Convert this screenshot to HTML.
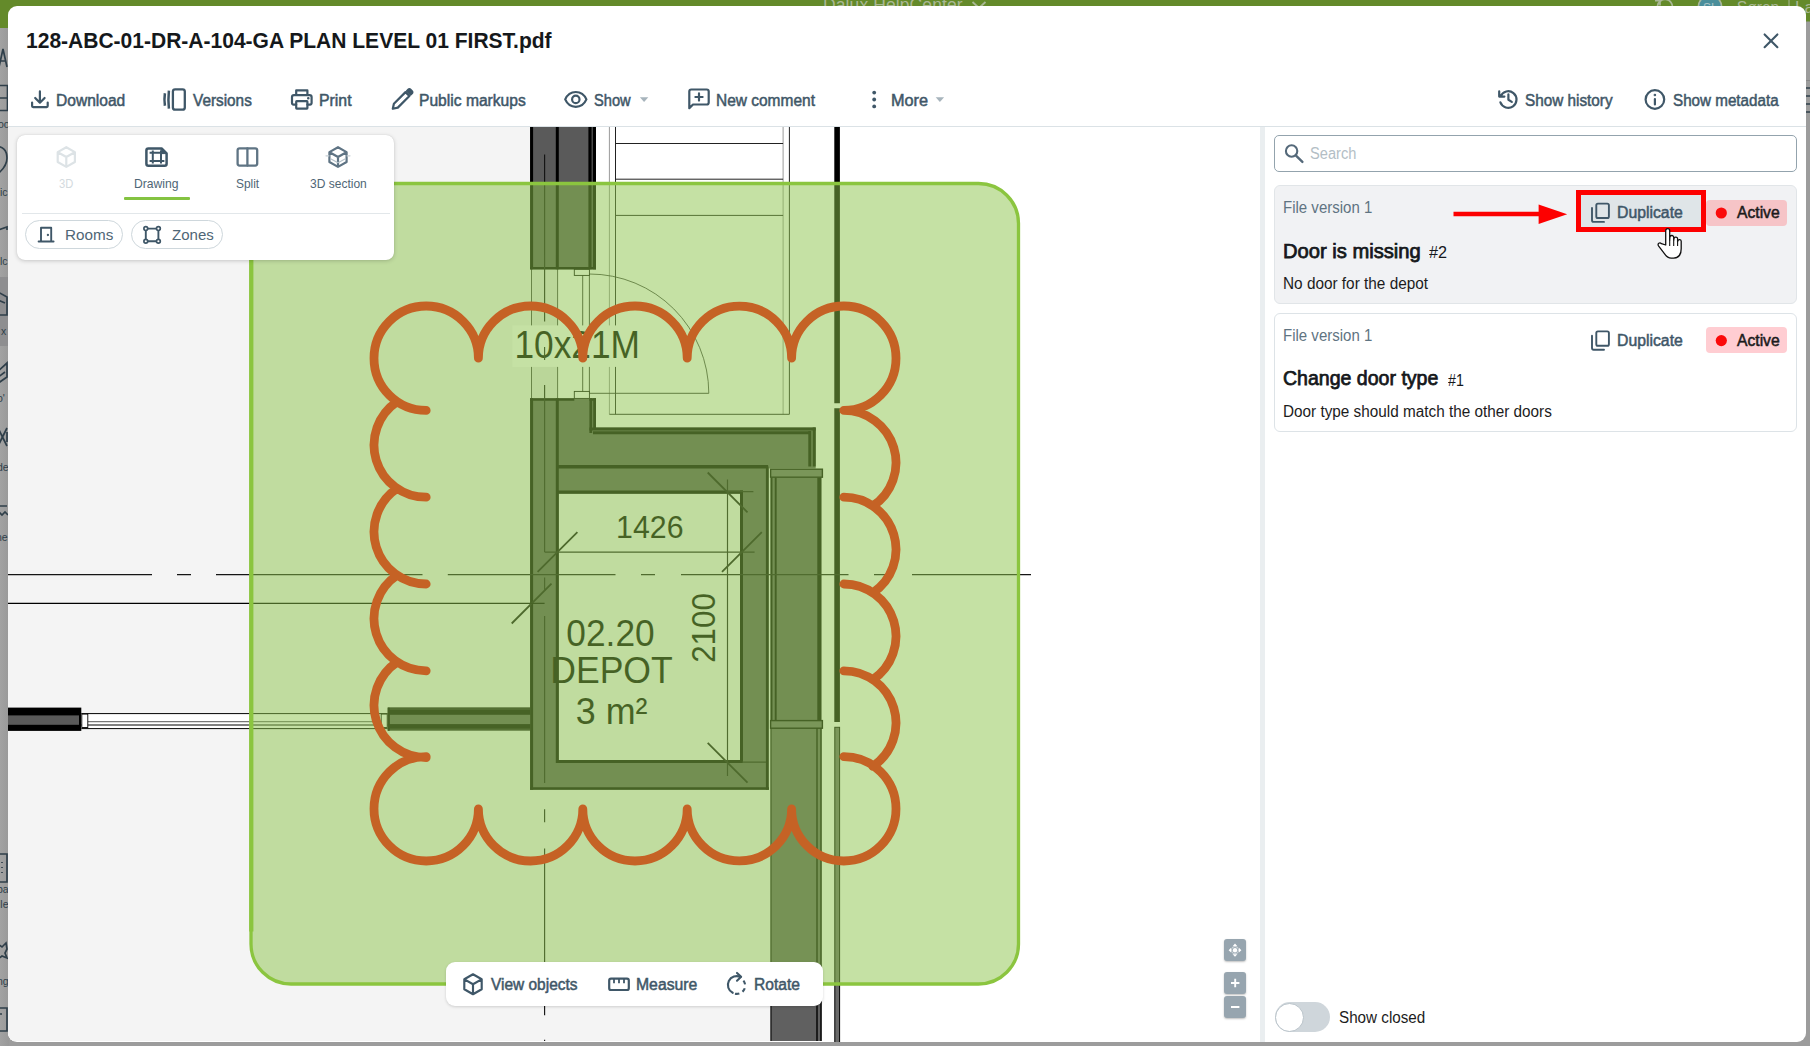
<!DOCTYPE html>
<html><head><meta charset="utf-8">
<style>
*{box-sizing:border-box}
html,body{margin:0;padding:0}
body{width:1810px;height:1046px;overflow:hidden;background:#9c9c9c;position:relative;font-family:"Liberation Sans",sans-serif;color:#3f5768}
.abs{position:absolute}
#modal{position:absolute;left:8px;top:5.7px;width:1798px;height:1036px;background:#fff;border-radius:9px;overflow:hidden}
#pg{position:absolute;left:-8px;top:-5.7px;width:1810px;height:1046px}
.t{position:absolute;white-space:nowrap;line-height:20px;font-size:15px;color:#3f5768;-webkit-text-stroke:0.35px #3f5768;transform-origin:0 50%}
.ic{position:absolute;overflow:visible}
.ic *{fill:none;stroke:#3f5768;stroke-width:2.2;stroke-linecap:round;stroke-linejoin:round}
</style></head><body>
<!-- background app (dimmed) -->
<div class="abs" style="left:0;top:0;width:1810px;height:28px;background:#648a2a"></div>
<div class="abs" style="left:0;top:28px;width:9px;height:1018px;background:linear-gradient(90deg,#a2a2a2,#999)"></div>
<div class="abs" style="left:0;top:277px;width:9px;height:69px;background:#8e8e90"></div>
<div class="abs" style="left:823px;top:-4.6px;font-size:17.5px;line-height:20px;color:#a9b795;white-space:nowrap;letter-spacing:.1px">Dalux HelpCenter</div>
<svg class="abs" style="left:0;top:0" width="1810" height="1046" viewBox="0 0 1810 1046">
<path d="M972.5 2l6.5 6 6.5-6" fill="none" stroke="#a9b795" stroke-width="1.8"/>
<circle cx="1710" cy="7.2" r="11.8" fill="#4a8e9b" stroke="#aab69a" stroke-width="1.6"/>
<text x="1703" y="11.5" font-family="Liberation Sans, sans-serif" font-size="12" fill="#a9c3c6">SL</text>
<text x="1736.8" y="13.4" font-family="Liberation Sans, sans-serif" font-size="17" fill="#a9b795" textLength="42.5" lengthAdjust="spacingAndGlyphs">Søren</text>
<text x="1795" y="13.4" font-family="Liberation Sans, sans-serif" font-size="17" fill="#a9b795">Lar</text>
<path d="M1789 0v7" stroke="#a9b795" stroke-width="1"/>
<path d="M1657.5 6a7.5 7.5 0 0 1 15 2M1655 0.6h5v5" fill="none" stroke="#a9b795" stroke-width="1.7"/>
<!-- left strip fragments -->
<g fill="none" stroke="#2f3f4a" stroke-width="1.7">
<path d="M-1 67l4-18 4 18M0 61h6"/>
<path d="M-2 85.5h9.5v25H-2M-2 98h9.5"/>
<path d="M-6 147c9-2 13 4 13 11s-5 13-12 18"/>
<path d="M-2 230l9-3v3"/>
<path d="M-2 292l9 5v18h-9M-2 300l7 3"/>
<path d="M-3 372l10-9v14l-10 7M-3 378l8-6"/>
<path d="M-2 428l9 18M7 428l-9 18M7 432v10"/>
<path d="M-2 506h9M-1 512l3 3 3-3 3 3"/>
<path d="M-2 854h9v28H-2M2 862v1M2 867v1M2 872v1" />
<path d="M-2 944l4 3 4-4 1 6-2 4 2 5-5-2-4 3"/>
<path d="M-2 1008h9v23H-2M0 1014h2"/>
</g>
<g font-family="Liberation Sans, sans-serif" font-size="10.5" fill="#2f3f4a">
<text x="-2" y="128">oo</text><text x="0" y="196">ic</text><text x="0" y="265">lc</text><text x="1" y="334.5">x</text><text x="-3" y="402">o'</text><text x="-3" y="471">de</text><text x="-4" y="541">ne</text><text x="-3" y="893">pa</text><text x="-2" y="908">ile</text><text x="-3" y="985">ng</text>
</g>
<!-- right strip fragments -->
<rect x="1806" y="21.5" width="4" height="7" fill="#9c9c9c"/>
<path d="M1806 88h4M1806 96h4M1806 104h4M1806 112h4" stroke="#2f3f4a" stroke-width="1.6"/>
<path d="M1806 80.5h4" stroke="#888" stroke-width="1"/>
</svg>

<div id="modal"><div id="pg">
<div class="abs" style="left:8px;top:126px;width:1798px;height:1px;background:#dbe2e6"></div>
<svg class="ic" style="left:0;top:0" width="1810" height="130" viewBox="0 0 1810 130">
<!-- close -->
<path d="M1764.6 34.4l12.8 12.8M1777.4 34.4l-12.8 12.8" style="stroke-width:2.1"/>
<!-- download -->
<path d="M39.9 91.4v11M35.2 98l4.7 4.7 4.7-4.7M32.1 102.6v3.5a1 1 0 0 0 1 1h13.6a1 1 0 0 0 1-1v-3.5"/>
<!-- versions -->
<rect x="172.9" y="89.3" width="11.9" height="20.4" rx="2.2" style="stroke-width:2.3"/>
<path d="M168.9 90.6q-0.9 9 0 18M164.9 93.3q-0.9 6.2 0 12.4" style="stroke-width:2.5;stroke-linecap:butt"/>
<!-- print -->
<path d="M296.2 95v-4.6h11.2v4.6M296.2 104.6h-2.7a1.5 1.5 0 0 1-1.5-1.5v-6a2 2 0 0 1 2-2h15.6a2 2 0 0 1 2 2v6a1.5 1.5 0 0 1-1.5 1.5h-2.7"/>
<rect x="296.2" y="101.2" width="11.2" height="7.4" rx="0.5"/>
<circle cx="308.3" cy="98.3" r="0.6" style="stroke-width:1.4"/>
<!-- pencil -->
<path d="M392.8 108.7l1.1-5 11.6-11.6 3.9 3.9-11.6 11.6z"/><path d="M406.6 91l1.6-1.6a1.6 1.6 0 0 1 2.3 0l1.7 1.7a1.6 1.6 0 0 1 0 2.3l-1.6 1.6z" style="fill:#3f5768;stroke-width:1.6"/>
<!-- eye -->
<path d="M565.2 99.4c2-4.6 5.9-7.4 10.6-7.4s8.6 2.8 10.6 7.4c-2 4.6-5.9 7.4-10.6 7.4s-8.6-2.8-10.6-7.4z"/>
<circle cx="575.8" cy="99.4" r="3.7"/>
<!-- new comment -->
<path d="M689.3 108.2v-16.7a2 2 0 0 1 2-2h15.4a2 2 0 0 1 2 2v11a2 2 0 0 1-2 2h-13.7zM699 93.4v7.2M695.4 97h7.2"/>
<!-- more dots -->
<g style="fill:#3f5768;stroke:none"><circle cx="874.2" cy="92.6" r="1.9" style="fill:#3f5768;stroke:none"/><circle cx="874.2" cy="99.5" r="1.9" style="fill:#3f5768;stroke:none"/><circle cx="874.2" cy="106.4" r="1.9" style="fill:#3f5768;stroke:none"/></g>
<!-- carets -->
<path d="M639.9 97.3h8.4l-4.2 4.6z" style="fill:#a7b4bc;stroke:none"/>
<path d="M935.7 97.3h8.4l-4.2 4.6z" style="fill:#a7b4bc;stroke:none"/>
<!-- history -->
<path d="M1500.6 96.2a8.3 8.3 0 1 1-0.2 6.2M1499.2 91.4v5.2h5.2M1508.4 94.4v5.4l3.4 2.1"/>
<!-- info -->
<circle cx="1654.9" cy="99.5" r="9.3"/>
<path d="M1654.9 99v5.4"/><circle cx="1654.9" cy="95" r="0.5" style="stroke-width:1.6"/>
</svg>

<svg class="abs" style="left:8px;top:127px" width="1252" height="915" viewBox="8 127 1252 915" shape-rendering="auto">
<rect x="8" y="127" width="1252" height="914" fill="#fff"/>
<!-- room fill (light grey) -->
<path d="M8 127H531V432H770V1041H8z" fill="#f4f4f4"/>
<rect x="531.5" y="269" width="26.1" height="130" fill="#e9e9e9"/>
<g id="drw" fill="none" stroke="#000">
<!-- shaft thin lines -->
<g stroke-width="1">
<path d="M609.4 127V414.3M783.1 127V414.3" stroke="#9a9a9a"/>
<path d="M615.5 127V414.3M789.4 127V414.3M609.4 414.3H789.4M615.5 143.5H783.1M615.5 179.2H783.1M615.5 215.4H783.1" stroke="#222"/>
<!-- door opening thin lines -->
<path d="M531.5 269V398M557.6 269V398" stroke="#333" stroke-width="0.9"/>
<!-- door leaf -->
<path d="M582.7 275V393.3M589.4 274V393.3M589.4 393.3H708.8" stroke="#222" stroke-width="0.9"/>
<path d="M589.4 274A119.4 119.4 0 0 1 708.8 393.3" stroke="#222" stroke-width="0.8"/>
</g>
<!-- upper-left wall -->
<rect x="530.1" y="127" width="65.9" height="142.2" fill="#5a5a5a" stroke="none"/>
<path d="M531.6 127V269.2M557.3 127V269.2" stroke-width="3"/>
<path d="M590 127V269.2M594.4 127V269.2" stroke-width="3.2"/>
<path d="M530.1 268.3H596" stroke-width="2.4"/>
<rect x="574.3" y="269.4" width="15.1" height="6" fill="#fff" stroke-width="0.9"/>
<!-- lower wall system fill -->
<path d="M530.1 398.3H596V427.4H815.7V468.5H769V789.8H530.1z" fill="#5a5a5a" stroke="none"/>
<rect x="558.8" y="493.7" width="181.2" height="266.5" fill="#f4f4f4" stroke="none"/>
<!-- wall lines -->
<path d="M531.6 398.3V789.8" stroke-width="3"/>
<path d="M557.3 398.3V763" stroke-width="3"/>
<path d="M530.1 399.5H574.3M589.4 399.5H596" stroke-width="2.4"/>
<path d="M590.8 398.3V433M594.6 398.3V429" stroke-width="2.8"/>
<path d="M589.4 429H815.7M593 432.8H810" stroke-width="3"/>
<path d="M809.8 431V466.5M814.2 427.4V466.5" stroke-width="3"/>
<path d="M557.2 466.8H768.1" stroke-width="3.4"/>
<path d="M557.2 492.2H743" stroke-width="3.2"/>
<path d="M741.5 490.6V763" stroke-width="3"/>
<path d="M767.2 466.5V789.8" stroke-width="2.6"/>
<path d="M557.2 761.5H743" stroke-width="3"/>
<path d="M530.1 788.5H769" stroke-width="2.6"/>
<rect x="574.3" y="391.4" width="15.1" height="7" fill="#fff" stroke-width="0.9"/>
<!-- column -->
<rect x="770.5" y="477.6" width="51" height="243" fill="#5a5a5a" stroke="none"/>
<rect x="770.5" y="728" width="51" height="313" fill="#606060" stroke="none"/>
<path d="M771.5 477.6V720M775.7 477.6V720" stroke-width="1.9"/>
<path d="M819.3 477.6V720" stroke-width="4"/>
<rect x="770.6" y="469.2" width="51.8" height="8" fill="#686868" stroke-width="1.4"/>
<rect x="770.6" y="720.6" width="51.8" height="7.6" fill="#686868" stroke-width="1.4"/>
<path d="M771 728V1041" stroke-width="1"/>
<path d="M817 728V1041M821 728V1041" stroke-width="1.4"/>
<!-- thick line right -->
<path d="M837.1 127V403.3M837.1 408.3V722" stroke-width="5.6"/>
<rect x="834.8" y="727.3" width="4.8" height="320" fill="#6a6a6a" stroke-width="1"/>
<!-- left wall + window -->
<rect x="8" y="707.6" width="73.3" height="23.3" fill="#000" stroke="none"/>
<rect x="8" y="715.4" width="71" height="9.4" fill="#5a5a5a" stroke="none"/>
<rect x="81.3" y="713.6" width="306.4" height="15" fill="#fff" stroke="none"/>
<path d="M81.3 713.6H387.7M81.3 725H387.7M81.3 728.6H387.7" stroke-width="1"/>
<path d="M87.8 721.6H381" stroke="#777" stroke-width="1.2"/>
<rect x="81.8" y="714.1" width="6" height="13.4" fill="#fff" stroke-width="0.9"/>
<rect x="381.2" y="714.1" width="6" height="13.4" fill="#fff" stroke-width="0.9"/>
<rect x="387.7" y="707.4" width="142.4" height="23.2" fill="#000" stroke="none"/>
<rect x="389.6" y="714.8" width="140.5" height="9.3" fill="#5a5a5a" stroke="none"/>
<path d="M389.6 709H530.1M389.6 729.2H530.1" stroke="#4a4a4a" stroke-width="0.7"/>
<path d="M388.7 707.7V730.8" stroke-width="2"/>
<g stroke-width="1.8" stroke="#111">
<path d="M537.6 571.9L577.4 532.1M722 571.9L761.8 532.1M511.7 623.5L551.5 583.7M707.7 472.5L747.5 512.3M707.7 742.9L747.5 782.7"/>
</g>
</g>
<!-- label box + texts -->
<rect x="512.4" y="325.4" width="129" height="41.5" fill="#fff"/>
<g font-family="Liberation Sans, sans-serif" fill="#000" text-anchor="middle">
<text x="577.2" y="358.4" font-size="38.4" textLength="125.6" lengthAdjust="spacingAndGlyphs">10x21M</text>
<text x="649.8" y="537.8" font-size="31.2" textLength="67.4" lengthAdjust="spacingAndGlyphs">1426</text>
<text x="610.5" y="646" font-size="37.4" textLength="88.3" lengthAdjust="spacingAndGlyphs">02.20</text>
<text x="611.5" y="682.6" font-size="37.4" textLength="122.5" lengthAdjust="spacingAndGlyphs">DEPOT</text>
<text x="611.7" y="724.4" font-size="37.4" textLength="71.7" lengthAdjust="spacingAndGlyphs">3 m²</text>
<text transform="translate(714.5 628) rotate(-90)" x="0" y="0" font-size="33.6" textLength="69.6" lengthAdjust="spacingAndGlyphs">2100</text>
</g>
<g fill="none"><g stroke-width="1.15" stroke="#151515">
<path d="M544.6 154.6V321.6M544.6 347V360M544.6 385V552M544.6 577.4V590.4M544.6 616V783M544.6 809.3V822.3M544.6 848.4V1015.3M544.6 1039.7V1041"/>
<path d="M8 574.6H152M177 574.6H191M216 574.6H422.5M447.8 574.6H615.5M641 574.6H655M681 574.6H848.5M874 574.6H888.6M912 574.6H1031"/>
<path d="M8 603.3H544.6" stroke="#000" stroke-width="1.3"/>
<path d="M544.6 552.1H754.6M727.5 479.6V776.1M727.5 491.6H753.4M742 762.1H766"/>
</g>
</g>
<!-- cloud -->
<path d="M478.4 358.2A52.2 52.2 0 0 1 582.8 358.2M582.8 358.2A52.2 52.2 0 0 1 687.2 358.2M687.2 358.2A52.2 52.2 0 0 1 791.6 358.2M582.8 808.8A52.2 52.2 0 0 1 478.4 808.8M687.2 808.8A52.2 52.2 0 0 1 582.8 808.8M791.6 808.8A52.2 52.2 0 0 1 687.2 808.8M478.4 358.2A52.2 52.2 0 1 0 426.2 410.4M791.6 358.2A52.2 52.2 0 1 1 843.8 410.4M397.2 401.6A52.2 52.2 0 0 0 426.2 497.2M397.2 488.4A52.2 52.2 0 0 0 426.2 584.0M397.2 575.2A52.2 52.2 0 0 0 426.2 670.8M397.2 662.0A52.2 52.2 0 0 0 426.2 757.6M843.8 410.4A52.2 52.2 0 0 1 872.8 506.0M843.8 497.2A52.2 52.2 0 0 1 872.8 592.8M843.8 584.0A52.2 52.2 0 0 1 872.8 679.6M843.8 670.8A52.2 52.2 0 0 1 872.8 766.4M426.2 756.6A52.2 52.2 0 1 0 478.4 808.8M843.8 756.6A52.2 52.2 0 1 1 791.6 808.8" fill="none" stroke="#ff0000" stroke-width="8.8" stroke-linecap="round"/>
<!-- overlay -->
<rect x="251" y="183.5" width="767.5" height="800.5" rx="40" fill="#8bc34a" fill-opacity="0.5" stroke="#8bc53f" stroke-width="3.3"/>
<path d="M251.3 224V931.5" stroke="#8bc53f" stroke-width="4.2" fill="none"/>
</svg>

<!-- view panel -->
<div class="abs" style="left:17px;top:135px;width:377px;height:125px;background:#fff;border-radius:8px;box-shadow:0 1px 4px rgba(0,0,0,.18),0 0 1px rgba(0,0,0,.15)"></div>
<div class="abs" style="left:124.2px;top:196.8px;width:65.8px;height:3px;background:#84c341;border-radius:1px"></div>
<div class="abs" style="left:21.5px;top:213px;width:368.5px;height:1px;background:#e2e7ea"></div>
<div class="abs" style="left:25px;top:220.2px;width:97.8px;height:29.3px;border:1px solid #ced7dc;border-radius:15px"></div>
<div class="abs" style="left:131.2px;top:220.2px;width:91.7px;height:29.3px;border:1px solid #ced7dc;border-radius:15px"></div>
<svg class="ic" style="left:0;top:130px" width="400" height="130" viewBox="0 130 400 130">
<!-- 3D cube disabled -->
<g style="stroke:#dde3e6"><path d="M66.3 147.2l8.6 4.9v9.9l-8.6 4.9-8.6-4.9v-9.9zM57.9 152.2l8.4 4.8 8.4-4.8M66.3 157v9.7" style="stroke:#dde3e6"/></g>
<!-- drawing -->
<path d="M148.4 148.4h13.2l5 5v10.3a2 2 0 0 1-2 2h-16.2a2 2 0 0 1-2-2v-13.3a2 2 0 0 1 2-2z" style="stroke-width:2.5"/>
<path d="M161.4 148.6l5 5h-5z" style="fill:#3f5768;stroke-width:1"/>
<path d="M149.6 152.8h14.8M149.6 161h14.8M152.8 150.4v13.2M161 150.4v13.2" style="stroke-width:2;stroke-linecap:butt"/>
<!-- split -->
<rect x="237.6" y="148.3" width="19.6" height="17.3" rx="2" style="stroke:#5f7484;stroke-width:2.3"/><path d="M247.4 148.3v17.3" style="stroke:#5f7484;stroke-width:2.3"/>
<!-- 3D section -->
<path d="M338 147.2l8.6 4.9v9.9l-8.6 4.9-8.6-4.9v-9.9zM329.6 152.2l8.4 4.8 8.4-4.8M338 157v9.7" style="stroke:#5f7484;stroke-width:2.2"/>
<path d="M326 155.8h3M347 155.8h3" style="stroke:#c5ced4;stroke-width:1.2"/>
<path d="M331 159l7 3.8 7-3.8" style="stroke:#b4c0c8;stroke-width:1.2"/>
<!-- rooms door icon -->
<path d="M38.6 241.5h15M41 241.5v-13.8h10.2v13.8" style="stroke-width:1.9"/><circle cx="47.9" cy="235" r="0.5" style="stroke-width:1.3"/>
<!-- zones icon -->
<rect x="145.8" y="228.6" width="12.6" height="12.6" style="stroke-width:1.9"/>
<g><circle cx="145.8" cy="228.6" r="1.9" style="fill:#fff;stroke-width:1.7"/><circle cx="158.4" cy="228.6" r="1.9" style="fill:#fff;stroke-width:1.7"/><circle cx="145.8" cy="241.2" r="1.9" style="fill:#fff;stroke-width:1.7"/><circle cx="158.4" cy="241.2" r="1.9" style="fill:#fff;stroke-width:1.7"/></g>
</svg>
<!-- bottom toolbar -->
<div class="abs" style="left:446px;top:962px;width:377px;height:44px;background:#fff;border-radius:9px;box-shadow:0 1px 3px rgba(0,0,0,.16)"></div>
<svg class="ic" style="left:440px;top:960px" width="400" height="50" viewBox="440 960 400 50">
<path d="M473 974.3l8.7 5v9.9l-8.7 5-8.7-5v-9.9zM464.5 979.4l8.5 4.9 8.5-4.9M473 984.3v9.8" style="stroke-width:2.15"/>
<rect x="609.2" y="978.6" width="19.6" height="11.4" rx="1.8"/><path d="M614 979v4.2M619 979v4.2M624 979v4.2" style="stroke-width:1.8;stroke-linecap:butt"/>
<path d="M737 972.9l4.1 3.9-4.1 3.9" style="stroke-width:2.1"/><path d="M740.6 977.1a8.3 8.3 0 0 0-7.9 15.7" style="stroke-width:2.1"/><path d="M732.7 992.8a8.3 8.3 0 0 0 10.6-12.4" style="stroke-width:2.1;stroke-dasharray:4.2 3.6;stroke-dashoffset:-2.5;stroke-linecap:butt"/>
</svg>
<!-- zoom buttons -->
<div class="abs" style="left:1224px;top:939px;width:22px;height:22px;background:#97a5af;border-radius:3px;box-shadow:0 1px 2px rgba(0,0,0,.25)"></div>
<div class="abs" style="left:1224px;top:972px;width:22px;height:22px;background:#97a5af;border-radius:3px;box-shadow:0 1px 2px rgba(0,0,0,.25)"></div>
<div class="abs" style="left:1224px;top:996px;width:22px;height:22px;background:#97a5af;border-radius:3px;box-shadow:0 1px 2px rgba(0,0,0,.25)"></div>
<svg class="abs" style="left:1220px;top:935px" width="30" height="90" viewBox="1220 935 30 90">
<circle cx="1235" cy="950.2" r="2.2" fill="#fff"/><circle cx="1235" cy="950.2" r="3.6" fill="none" stroke="#fff" stroke-opacity=".55" stroke-width="1"/>
<path d="M1235 943.6l2.4 2.6h-4.8zM1235 956.8l2.4-2.6h-4.8zM1228.6 950.2l2.5-2.4v4.8zM1241.4 950.2l-2.5-2.4v4.8z" fill="#fff"/>
<path d="M1231 983h8.4M1235.2 978.8v8.4M1231 1007h8.4" stroke="#fff" stroke-width="1.9" fill="none"/>
</svg>
<!-- divider -->
<div class="abs" style="left:1260px;top:127px;width:5px;height:916px;background:#eaeef0"></div>
<!-- right panel -->
<div class="abs" style="left:1274px;top:135px;width:523px;height:36.5px;border:1px solid #93a3ad;border-radius:5px;background:#fff"></div>
<svg class="ic" style="left:1280px;top:140px" width="30" height="30" viewBox="1280 140 30 30"><circle cx="1291.6" cy="151" r="5.7" style="stroke:#55697a;stroke-width:2.1"/><path d="M1296 155.6l6.4 6.3" style="stroke:#55697a;stroke-width:2.4"/></svg>
<div class="abs" style="left:1274px;top:185px;width:523px;height:118.5px;border:1px solid #e1e5e8;border-radius:6px;background:#f1f2f4"></div>
<div class="abs" style="left:1274px;top:313px;width:523px;height:118.5px;border:1px solid #dde3e7;border-radius:6px;background:#fff"></div>
<!-- duplicate hover + red box -->
<div class="abs" style="left:1576px;top:190px;width:130px;height:41.5px;border:5px solid #fd0000;background:#dfe5e8"></div>
<div class="abs" style="left:1705.5px;top:199.8px;width:81.5px;height:26px;background:#f6c4c7;border-radius:4px"></div>
<div class="abs" style="left:1705.5px;top:327.3px;width:81.5px;height:26px;background:#ffcdd2;border-radius:4px"></div>
<svg class="abs" style="left:1440px;top:185px" width="360" height="180" viewBox="1440 185 360 180">
<circle cx="1721.3" cy="213" r="5.6" fill="#fb0a0a"/><circle cx="1721.3" cy="340.6" r="5.6" fill="#fb0a0a"/>
<path d="M1453.5 214H1541" stroke="#fd0000" stroke-width="4.6" fill="none"/><path d="M1538.6 204.5L1567.2 214.2 1538.6 224z" fill="#fd0000"/>
<g fill="none" stroke="#3f5768" stroke-width="1.9" stroke-linejoin="round" stroke-linecap="round">
<rect x="1596.3" y="203.6" width="12.6" height="14.4" rx="1.6"/><path d="M1592 208v12.3a1.6 1.6 0 0 0 1.6 1.6h10.4"/>
<rect x="1596.3" y="331.4" width="12.6" height="14.4" rx="1.6"/><path d="M1592 335.8v12.3a1.6 1.6 0 0 0 1.6 1.6h10.4"/>
</g>
<!-- hand cursor -->
<g transform="translate(1656.5 227.5)">
<path d="M9.2 17.5V3.2a2 2 0 0 1 4 0v9.2l0.2-2.6a1.9 1.9 0 0 1 3.8 0.2v2.8l0.3-1.6a1.8 1.8 0 0 1 3.6 0.4v2.6l0.3-1a1.7 1.7 0 0 1 3.3 0.6v7.4c0 5.5-2.6 9.4-7.6 9.4h-2.4c-3 0-4.6-1.4-6.2-3.8L2 18.4c-1.3-2.2 1.2-3.9 2.9-2.2z" fill="#fff" stroke="#111" stroke-width="1.3" stroke-linejoin="round"/>
<path d="M13.2 12.5v6M17.2 13v5.5M21.1 14.5v4" stroke="#111" stroke-width="1.1" fill="none"/>
</g>
</svg>
<!-- toggle -->
<div class="abs" style="left:1274.5px;top:1002px;width:55.5px;height:30px;background:#cfd6db;border-radius:15px"></div>
<div class="abs" style="left:1275px;top:1002.5px;width:29px;height:29px;background:#fff;border:1.6px solid #b8c2c9;border-radius:50%"></div>

<div class="t" style="left:25.92px;top:29.97px;font-size:22.6px;line-height:22.6px;color:#15181b;transform:scaleX(0.9304);font-weight:bold;-webkit-text-stroke:0;">128-ABC-01-DR-A-104-GA PLAN LEVEL 01 FIRST.pdf</div>
<div class="t" style="left:56.35px;top:92.59px;font-size:15.6px;line-height:15.6px;color:#3f5768;transform:scaleX(0.9989);-webkit-text-stroke:0.5px #3f5768;">Download</div>
<div class="t" style="left:193.05px;top:92.59px;font-size:15.6px;line-height:15.6px;color:#3f5768;transform:scaleX(0.9831);-webkit-text-stroke:0.5px #3f5768;">Versions</div>
<div class="t" style="left:318.94px;top:92.59px;font-size:15.6px;line-height:15.6px;color:#3f5768;transform:scaleX(1.0148);-webkit-text-stroke:0.5px #3f5768;">Print</div>
<div class="t" style="left:419.15px;top:92.59px;font-size:15.6px;line-height:15.6px;color:#3f5768;transform:scaleX(1.0019);-webkit-text-stroke:0.5px #3f5768;">Public markups</div>
<div class="t" style="left:593.55px;top:92.59px;font-size:15.6px;line-height:15.6px;color:#3f5768;transform:scaleX(0.9385);-webkit-text-stroke:0.5px #3f5768;">Show</div>
<div class="t" style="left:715.76px;top:92.59px;font-size:15.6px;line-height:15.6px;color:#3f5768;transform:scaleX(0.9927);-webkit-text-stroke:0.5px #3f5768;">New comment</div>
<div class="t" style="left:890.61px;top:92.59px;font-size:15.6px;line-height:15.6px;color:#3f5768;transform:scaleX(1.0427);-webkit-text-stroke:0.5px #3f5768;">More</div>
<div class="t" style="left:1525.45px;top:92.59px;font-size:15.6px;line-height:15.6px;color:#3f5768;transform:scaleX(0.9813);-webkit-text-stroke:0.5px #3f5768;">Show history</div>
<div class="t" style="left:1672.65px;top:92.59px;font-size:15.6px;line-height:15.6px;color:#3f5768;transform:scaleX(0.9744);-webkit-text-stroke:0.5px #3f5768;">Show metadata</div>
<div class="t" style="left:59.15px;top:178.00px;font-size:12.4px;line-height:12.4px;color:#d3dade;transform:scaleX(0.8999);-webkit-text-stroke:0;">3D</div>
<div class="t" style="left:134.37px;top:178.00px;font-size:12.4px;line-height:12.4px;color:#4f6676;transform:scaleX(0.9808);-webkit-text-stroke:0;">Drawing</div>
<div class="t" style="left:235.75px;top:178.00px;font-size:12.4px;line-height:12.4px;color:#4f6676;transform:scaleX(0.9610);-webkit-text-stroke:0;">Split</div>
<div class="t" style="left:309.95px;top:178.00px;font-size:12.4px;line-height:12.4px;color:#4f6676;transform:scaleX(0.9702);-webkit-text-stroke:0;">3D section</div>
<div class="t" style="left:65.41px;top:227.86px;font-size:14.7px;line-height:14.7px;color:#4f6676;transform:scaleX(1.0381);-webkit-text-stroke:0;">Rooms</div>
<div class="t" style="left:172.05px;top:227.86px;font-size:14.7px;line-height:14.7px;color:#4f6676;transform:scaleX(1.0228);-webkit-text-stroke:0;">Zones</div>
<div class="t" style="left:490.95px;top:977.29px;font-size:15.6px;line-height:15.6px;color:#3f5768;transform:scaleX(0.9913);-webkit-text-stroke:0.5px #3f5768;">View objects</div>
<div class="t" style="left:635.74px;top:977.29px;font-size:15.6px;line-height:15.6px;color:#3f5768;transform:scaleX(1.0102);-webkit-text-stroke:0.5px #3f5768;">Measure</div>
<div class="t" style="left:754.35px;top:977.29px;font-size:15.6px;line-height:15.6px;color:#3f5768;transform:scaleX(1.0007);-webkit-text-stroke:0.5px #3f5768;">Rotate</div>
<div class="t" style="left:1310.15px;top:146.29px;font-size:15.6px;line-height:15.6px;color:#b3bec5;transform:scaleX(0.9377);-webkit-text-stroke:0;">Search</div>
<div class="t" style="left:1282.99px;top:199.59px;font-size:15.6px;line-height:15.6px;color:#5f7482;transform:scaleX(0.9631);-webkit-text-stroke:0;">File version 1</div>
<div class="t" style="left:1617.24px;top:205.29px;font-size:15.6px;line-height:15.6px;color:#3f5768;transform:scaleX(1.0120);-webkit-text-stroke:0.5px #3f5768;">Duplicate</div>
<div class="t" style="left:1736.55px;top:205.29px;font-size:15.6px;line-height:15.6px;color:#1b1b1b;transform:scaleX(1.0050);-webkit-text-stroke:0.5px #1b1b1b;">Active</div>
<div class="t" style="left:1282.94px;top:240.97px;font-size:20px;line-height:20px;color:#15181b;transform:scaleX(1.0076);-webkit-text-stroke:0.75px #15181b;">Door is missing</div>
<div class="t" style="left:1429.05px;top:245.49px;font-size:15.6px;line-height:15.6px;color:#15181b;transform:scaleX(1.0376);-webkit-text-stroke:0;">#2</div>
<div class="t" style="left:1282.97px;top:275.59px;font-size:15.6px;line-height:15.6px;color:#1c1c1c;transform:scaleX(0.9841);-webkit-text-stroke:0;">No door for the depot</div>
<div class="t" style="left:1282.99px;top:327.59px;font-size:15.6px;line-height:15.6px;color:#5f7482;transform:scaleX(0.9631);-webkit-text-stroke:0;">File version 1</div>
<div class="t" style="left:1617.24px;top:333.39px;font-size:15.6px;line-height:15.6px;color:#3f5768;transform:scaleX(1.0120);-webkit-text-stroke:0.5px #3f5768;">Duplicate</div>
<div class="t" style="left:1736.55px;top:333.39px;font-size:15.6px;line-height:15.6px;color:#1b1b1b;transform:scaleX(1.0050);-webkit-text-stroke:0.5px #1b1b1b;">Active</div>
<div class="t" style="left:1282.97px;top:368.07px;font-size:20px;line-height:20px;color:#15181b;transform:scaleX(0.9767);-webkit-text-stroke:0.75px #15181b;">Change door type</div>
<div class="t" style="left:1447.95px;top:372.59px;font-size:15.6px;line-height:15.6px;color:#15181b;transform:scaleX(0.9117);-webkit-text-stroke:0;">#1</div>
<div class="t" style="left:1282.97px;top:403.59px;font-size:15.6px;line-height:15.6px;color:#1c1c1c;transform:scaleX(0.9816);-webkit-text-stroke:0;">Door type should match the other doors</div>
<div class="t" style="left:1339.35px;top:1009.59px;font-size:15.6px;line-height:15.6px;color:#1c1c1c;transform:scaleX(0.9756);-webkit-text-stroke:0;">Show closed</div>
</div></div>
</body></html>
